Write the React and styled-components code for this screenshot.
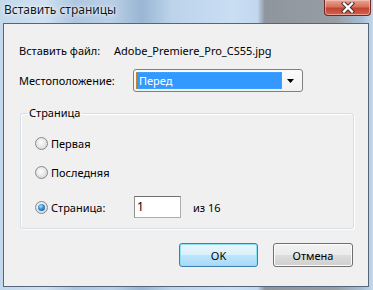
import styled, { createGlobalStyle } from "styled-components";

const GlobalStyle = createGlobalStyle`
  html, body {
    margin: 0;
    padding: 0;
    background: #8f969d;
  }
  body {
    font-family: "Noto Sans", "Liberation Sans", sans-serif;
    font-size: 11px;
    color: #000;
  }
`;

const Window = styled.div`
  width: 373px;
  height: 290px;
  box-sizing: border-box;
  display: flex;
  flex-direction: column;
  padding: 0 4px 3px 3px;
  background: linear-gradient(
    90deg,
    #c3d8ec 0%,
    #cfe0f1 12%,
    #adc6df 20%,
    #b9cfe6 30%,
    #9ab6d3 38%,
    #bcd3ea 46%,
    #c9def3 62%,
    #c2d8ee 69%,
    #8e959c 71%,
    #979ea5 90%,
    #a7bdd3 97%,
    #c5d9ec 100%
  );
`;

const TitleBar = styled.div`
  height: 23px;
  flex-shrink: 0;
  display: flex;
  align-items: flex-start;
  justify-content: space-between;
  padding-left: 1px;
`;

const Title = styled.span`
  font-size: 12px;
  line-height: 20px;
  color: #10161e;
  text-shadow: 0 0 6px rgba(255, 255, 255, 0.9), 0 0 2px rgba(255, 255, 255, 0.9);
`;

const CloseButton = styled.div`
  width: 45px;
  height: 15px;
  margin-right: -2px;
  border: 1px solid #6b2a24;
  border-top: none;
  border-radius: 0 0 4px 4px;
  background: linear-gradient(180deg, #e8a493 0%, #d7715e 45%, #c4432f 55%, #d0644e 100%);
  box-shadow: inset 0 0 0 1px rgba(255, 210, 200, 0.55);
  display: flex;
  align-items: center;
  justify-content: center;
`;

const Client = styled.div`
  flex: 1;
  background: #f0f0f0;
  border: 1px solid #55657a;
  display: flex;
  flex-direction: column;
  padding: 15px 14px 0 15px;
`;

const Row = styled.div`
  display: flex;
  align-items: center;
  height: ${(p) => p.$h || 22}px;
  margin-top: ${(p) => p.$mt || 0}px;
`;

const Label = styled.span`
  width: ${(p) => p.$w}px;
  flex-shrink: 0;
  white-space: nowrap;
`;

const Combo = styled.div`
  width: 170px;
  height: 23px;
  box-sizing: border-box;
  border: 1px solid #7f7f7f;
  border-radius: 3px;
  background: linear-gradient(180deg, #fbfbfb, #f1f1f1);
  display: flex;
  align-items: center;
  padding: 2px;
`;

const ComboValue = styled.div`
  flex: 1;
  height: 17px;
  box-sizing: border-box;
  background: #3399ff;
  border: 1px dotted #c88a3c;
  color: #fff;
  padding-left: 2px;
  line-height: 15px;
`;

const ComboArrow = styled.div`
  width: 18px;
  display: flex;
  justify-content: center;
  align-items: center;
`;

const Group = styled.fieldset`
  margin: 13px 0 0 1px;
  padding: 0 14px 10px 14px;
  border: 1px solid #d5dfe5;
  border-radius: 3px;
  box-shadow: inset 1px 1px 0 #fff, 1px 1px 0 #fff;
`;

const Legend = styled.legend`
  margin-left: -8px;
  padding: 0 2px;
  line-height: 16px;
`;

const RadioBox = styled.span`
  width: 13px;
  height: 13px;
  box-sizing: border-box;
  border-radius: 50%;
  border: 1px solid #8a8a8a;
  background: radial-gradient(circle at 45% 40%, #fdfdfd 0%, #e4e4e4 55%, #c9c9c9 100%);
  margin-right: 3px;
  flex-shrink: 0;
  display: flex;
  align-items: center;
  justify-content: center;

  &::after {
    content: "";
    display: ${(p) => (p.$checked ? "block" : "none")};
    width: 7px;
    height: 7px;
    border-radius: 50%;
    background: radial-gradient(circle at 40% 35%, #a8e0ff 0%, #2f8fd8 45%, #0c4f8f 100%);
  }
`;

const RadioLabel = styled.span`
  width: ${(p) => p.$w || "auto"};
  white-space: nowrap;
`;

const TextBox = styled.div`
  width: 47px;
  height: 22px;
  box-sizing: border-box;
  border: 1px solid #abadb3;
  border-top-color: #707070;
  border-left-color: #8f8f8f;
  background: #fff;
  padding-left: 2px;
  font-size: 12px;
  line-height: 20px;
  margin-right: 12px;
`;

const ButtonRow = styled.div`
  display: flex;
  justify-content: flex-end;
  gap: 15px;
  margin-top: 14px;
  margin-right: 1px;
`;

const Button = styled.div`
  width: ${(p) => p.$w}px;
  height: 24px;
  box-sizing: border-box;
  border-radius: 3px;
  border: 1px solid ${(p) => (p.$default ? "#3c7fb1" : "#707070")};
  background: ${(p) =>
    p.$default
      ? "linear-gradient(180deg, #eaf6fd 0%, #d9f0fc 50%, #bee6fd 50%, #a7d9f5 100%)"
      : "linear-gradient(180deg, #f2f2f2 0%, #ebebeb 50%, #dddddd 50%, #cfcfcf 100%)"};
  box-shadow: inset 0 0 0 1px ${(p) => (p.$default ? "#8fe0f7" : "#fcfcfc")};
  display: flex;
  align-items: center;
  justify-content: center;
`;

export default function App() {
  return (
    <>
      <GlobalStyle />
      <Window>
        <TitleBar>
          <Title>Вставить страницы</Title>
          <CloseButton>
            <svg width="14" height="11" viewBox="0 0 14 11">
              <path
                d="M3 1.5 L11 9.5 M11 1.5 L3 9.5"
                stroke="#3d2b2b"
                strokeWidth="4.2"
                strokeLinecap="square"
              />
              <path
                d="M3 1.5 L11 9.5 M11 1.5 L3 9.5"
                stroke="#ffffff"
                strokeWidth="2.4"
                strokeLinecap="square"
              />
            </svg>
          </CloseButton>
        </TitleBar>
        <Client>
          <Row>
            <Label $w={95}>Вставить файл:</Label>
            <span>Adobe_Premiere_Pro_CS55.jpg</span>
          </Row>
          <Row $mt={8} $h={23}>
            <Label $w={114}>Местоположение:</Label>
            <Combo>
              <ComboValue>Перед</ComboValue>
              <ComboArrow>
                <svg width="8" height="4" viewBox="0 0 8 4">
                  <path d="M0 0 H7 L3.5 4 Z" fill="#000" />
                </svg>
              </ComboArrow>
            </Combo>
          </Row>
          <Group>
            <Legend>Страница</Legend>
            <Row $mt={12} $h={20}>
              <RadioBox />
              <RadioLabel>Первая</RadioLabel>
            </Row>
            <Row $mt={9} $h={20}>
              <RadioBox />
              <RadioLabel>Последняя</RadioLabel>
            </Row>
            <Row $mt={14} $h={22}>
              <RadioBox $checked />
              <RadioLabel $w="83px">Страница:</RadioLabel>
              <TextBox>1</TextBox>
              <span>из 16</span>
            </Row>
          </Group>
          <ButtonRow>
            <Button $w={79} $default>
              OK
            </Button>
            <Button $w={80}>Отмена</Button>
          </ButtonRow>
        </Client>
      </Window>
    </>
  );
}
